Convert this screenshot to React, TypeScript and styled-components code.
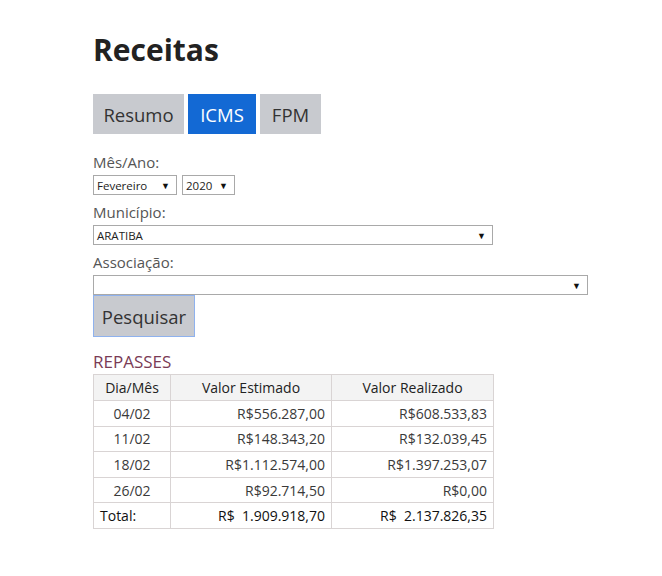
import { FC } from "react";
import styled, { createGlobalStyle } from "styled-components";

const GlobalStyle = createGlobalStyle`
  body {
    margin: 0;
    background: #fff;
    font-family: "Open Sans", "Noto Sans", sans-serif;
    color: #333;
  }
`;

interface IRow {
  day: string;
  estimated: string;
  realized: string;
}

const rows: IRow[] = [
  { day: "04/02", estimated: "R$556.287,00", realized: "R$608.533,83" },
  { day: "11/02", estimated: "R$148.343,20", realized: "R$132.039,45" },
  { day: "18/02", estimated: "R$1.112.574,00", realized: "R$1.397.253,07" },
  { day: "26/02", estimated: "R$92.714,50", realized: "R$0,00" },
];

const Select: FC<{ value: string; width: number }> = ({ value, width }) => (
  <SelectBox $width={width}>
    <span>{value}</span>
    <Arrow>▼</Arrow>
  </SelectBox>
);

const App: FC = () => {
  return (
    <Page>
      <GlobalStyle />
      <Title>Receitas</Title>
      <Tabs>
        <Tab $width={91}>Resumo</Tab>
        <Tab $width={68} $active>
          ICMS
        </Tab>
        <Tab $width={61}>FPM</Tab>
      </Tabs>

      <Field>
        <Label>Mês/Ano:</Label>
        <SelectRow>
          <Select value="Fevereiro" width={84} />
          <Select value="2020" width={53} />
        </SelectRow>
      </Field>
      <Field>
        <Label>Município:</Label>
        <Select value="ARATIBA" width={400} />
      </Field>
      <Field $last>
        <Label>Associação:</Label>
        <Select value="" width={495} />
      </Field>
      <SearchButton>Pesquisar</SearchButton>

      <Section>REPASSES</Section>
      <Table>
        <colgroup>
          <col style={{ width: 77 }} />
          <col style={{ width: 161 }} />
          <col style={{ width: 162 }} />
        </colgroup>
        <thead>
          <tr>
            <Th>Dia/Mês</Th>
            <Th>Valor Estimado</Th>
            <Th>Valor Realizado</Th>
          </tr>
        </thead>
        <tbody>
          {rows.map((r) => (
            <tr key={r.day}>
              <Td $align="center">{r.day}</Td>
              <Td $align="right">{r.estimated}</Td>
              <Td $align="right">{r.realized}</Td>
            </tr>
          ))}
          <TotalRow>
            <Td $align="left">Total:</Td>
            <Td $align="right">R$&nbsp;&nbsp;1.909.918,70</Td>
            <Td $align="right">R$&nbsp;&nbsp;2.137.826,35</Td>
          </TotalRow>
        </tbody>
      </Table>
    </Page>
  );
};

const Page = styled.div`
  padding: 30px 0 40px 93px;
`;

const Title = styled.h1`
  margin: 0 0 24px;
  font-size: 30px;
  line-height: 40px;
  font-weight: 700;
  color: #222;
`;

const Tabs = styled.div`
  display: flex;
  gap: 4px;
  margin-bottom: 16px;
`;

const Tab = styled.button<{ $active?: boolean; $width: number }>`
  width: ${(p) => p.$width}px;
  height: 40px;
  padding: 0;
  border: none;
  font-family: inherit;
  font-size: 18.5px;
  background: ${(p) => (p.$active ? "#1369d4" : "#c8cacf")};
  color: ${(p) => (p.$active ? "#fff" : "#333")};
`;

const Field = styled.div<{ $last?: boolean }>`
  display: flex;
  flex-direction: column;
  align-items: flex-start;
  gap: 1px;
  margin-bottom: ${(p) => (p.$last ? "0" : "5px")};
`;

const Label = styled.label`
  display: block;
  height: 24px;
  font-size: 15px;
  line-height: 24px;
  color: #555;
`;

const SelectRow = styled.div`
  display: flex;
  gap: 5px;
`;

const SelectBox = styled.div<{ $width: number }>`
  width: ${(p) => p.$width}px;
  height: 20px;
  box-sizing: border-box;
  border: 1px solid #a9a9a9;
  display: flex;
  align-items: center;
  justify-content: space-between;
  padding: 0 6px 0 3px;
  font-size: 11.5px;
  color: #222;
  background: #fff;
`;

const Arrow = styled.span`
  font-size: 9px;
  color: #111;
`;

const SearchButton = styled.button`
  display: block;
  width: 102px;
  height: 42px;
  background: #c8cacf;
  border: 1px solid #8fb2ee;
  font-family: inherit;
  font-size: 18.5px;
  color: #333;
  padding: 0;
`;

const Section = styled.div`
  margin-top: 13px;
  font-size: 17px;
  line-height: 24px;
  color: #7a3b55;
`;

const Table = styled.table`
  width: 400px;
  table-layout: fixed;
  border-collapse: collapse;
  font-size: 14px;
  color: #3a3a3a;
`;

const Th = styled.th`
  height: 25px;
  padding: 0 6px;
  background: #f3f3f3;
  border: 1px solid #d9d4d4;
  font-weight: 400;
  text-align: center;
  color: #222;
`;

const Td = styled.td<{ $align: "left" | "center" | "right" }>`
  height: 24.6px;
  padding: 0 6px;
  border: 1px solid #d9d4d4;
  text-align: ${(p) => p.$align};
`;

const TotalRow = styled.tr`
  td {
    color: #111;
  }
`;

export default App;
